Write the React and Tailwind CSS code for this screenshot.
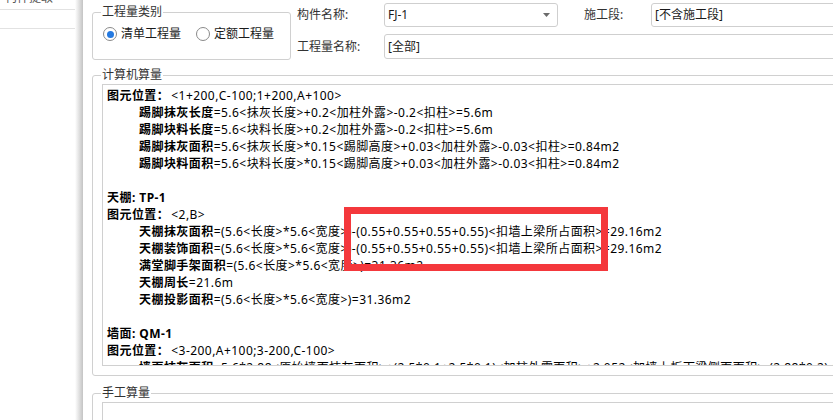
import React from "react";

const Caret = () => (
  <svg width="7" height="4" viewBox="0 0 7 4" className="shrink-0">
    <path d="M0 0 L7 0 L3.5 4 Z" fill="#6b6b6b" />
  </svg>
);

const Select = ({ value, className = "" }) => (
  <div
    className={`flex items-center justify-between rounded-[3px] border border-[#cfcfcf] bg-white pl-[3px] pr-[7px] ${className}`}
  >
    <span className="text-[12px] leading-none text-[#1a1a1a]">{value}</span>
    <Caret />
  </div>
);

const Radio = ({ checked, label }) => (
  <label className="flex items-center gap-[4px]">
    <span className="flex h-[14px] w-[14px] items-center justify-center rounded-full border border-[#8a8a8a] bg-white">
      {checked && <span className="h-[7px] w-[7px] rounded-full bg-[#2479e0]" />}
    </span>
    <span className="text-[12px] leading-[16px] text-[#1a1a1a]">{label}</span>
  </label>
);

const lines = [
  { kind: "pos", text: "<1+200,C-100;1+200,A+100>" },
  { kind: "item", label: "踢脚抹灰长度", text: "=5.6<抹灰长度>+0.2<加柱外露>-0.2<扣柱>=5.6m" },
  { kind: "item", label: "踢脚块料长度", text: "=5.6<块料长度>+0.2<加柱外露>-0.2<扣柱>=5.6m" },
  { kind: "item", label: "踢脚抹灰面积", text: "=5.6<抹灰长度>*0.15<踢脚高度>+0.03<加柱外露>-0.03<扣柱>=0.84m2" },
  { kind: "item", label: "踢脚块料面积", text: "=5.6<块料长度>*0.15<踢脚高度>+0.03<加柱外露>-0.03<扣柱>=0.84m2" },
  { kind: "blank" },
  { kind: "title", text: "天棚: TP-1" },
  { kind: "pos", text: "<2,B>" },
  { kind: "item", label: "天棚抹灰面积", text: "=(5.6<长度>*5.6<宽度>)-(0.55+0.55+0.55+0.55)<扣墙上梁所占面积>=29.16m2" },
  { kind: "item", label: "天棚装饰面积", text: "=(5.6<长度>*5.6<宽度>)-(0.55+0.55+0.55+0.55)<扣墙上梁所占面积>=29.16m2" },
  { kind: "item", label: "满堂脚手架面积", text: "=(5.6<长度>*5.6<宽度>)=31.36m2" },
  { kind: "item", label: "天棚周长", text: "=21.6m" },
  { kind: "item", label: "天棚投影面积", text: "=(5.6<长度>*5.6<宽度>)=31.36m2" },
  { kind: "blank" },
  { kind: "title", text: "墙面: QM-1" },
  { kind: "pos", text: "<3-200,A+100;3-200,C-100>" },
  {
    kind: "item",
    label: "墙面抹灰面积",
    text: "=5.6*2.88<原始墙面抹灰面积>+(2.5*0.1+2.5*0.1)<加柱外露面积>+2.052<加墙上板下梁侧面面积>-(2.88*0.2)<扣柱>=18.17m2",
  },
];

const Line = ({ line }) => {
  if (line.kind === "blank") return <div className="h-[17px]" />;
  if (line.kind === "title")
    return <div className="h-[17px] whitespace-nowrap font-bold">{line.text}</div>;
  if (line.kind === "pos")
    return (
      <div className="h-[17px] whitespace-nowrap">
        <span className="font-bold">图元位置：</span>
        <span className="ml-[2px]">{line.text}</span>
      </div>
    );
  return (
    <div className="h-[17px] whitespace-nowrap pl-[32px]">
      <span className="font-bold">{line.label}</span>
      <span>{line.text}</span>
    </div>
  );
};

export default function App() {
  return (
    <div className="flex h-[420px] w-[833px] overflow-hidden bg-white font-['Noto_Sans','Noto_Sans_CJK_SC',sans-serif] text-[#111]">
      {/* left list, mostly hidden behind the dialog */}
      <div className="w-[75px] shrink-0 bg-white">
        <div className="h-[10px] overflow-hidden border-b border-[#e2e2e2]">
          <div className="-mt-[10px] pl-[5px] text-[12px] leading-[16px] text-[#555]">构件提取</div>
        </div>
        <div className="h-[19px] border-b border-[#e2e2e2]" />
      </div>
      <div className="w-[8px] shrink-0 bg-gradient-to-r from-white to-[#c4c4c4]" />

      {/* dialog */}
      <div className="flex-1 pl-[9px] pr-[10px]">
        <div className="flex">
          <fieldset className="mt-[4px] h-[56px] w-[199px] shrink-0 rounded-[3px] border border-[#d0d0d0] px-[8px]">
            <legend className="px-[1px] text-[12px] leading-[16px] text-[#333]">工程量类别</legend>
            <div className="flex items-center gap-[15px] pl-[2px] pt-[6px]">
              <Radio checked label="清单工程量" />
              <Radio label="定额工程量" />
            </div>
          </fieldset>

          <div className="ml-[6px] flex flex-1 flex-col gap-[7px] pt-[3px] text-[12px] text-[#333]">
            <div className="flex h-[24px] items-center">
              <span className="w-[87px]">构件名称:</span>
              <Select value="FJ-1" className="h-[24px] w-[174px]" />
              <span className="w-[93px] pl-[26px]">施工段:</span>
              <Select value="[不含施工段]" className="h-[24px] flex-1" />
            </div>
            <div className="flex h-[25px] items-center">
              <span className="w-[87px]">工程量名称:</span>
              <Select value="[全部]" className="h-[25px] flex-1" />
            </div>
          </div>
        </div>

        <fieldset className="mt-[7px] rounded-[3px] border border-[#d0d0d0] px-[8px] pb-[9px]">
          <legend className="px-[1px] text-[12px] leading-[16px] text-[#333]">计算机算量</legend>
          <div className="relative mx-[1px] mt-[1px] h-[282px] overflow-hidden border border-[#d0d0d0] bg-white pl-[4px] pt-[2px] text-[12px] leading-[17px] tracking-[0.45px] text-black">
            {lines.map((line, i) => (
              <Line key={i} line={line} />
            ))}
            <div className="absolute right-[3px] top-[156px] h-[28px] w-[8px] rounded-[4px] bg-[#c9c9c9]" />
            <div className="absolute left-[241px] top-[122px] h-[64px] w-[264px] border-[7px] border-[#f4383c]" />
          </div>
        </fieldset>

        <fieldset className="mt-[9px] h-[60px] rounded-[3px] border border-[#d0d0d0] px-[8px]">
          <legend className="px-[1px] text-[12px] leading-[16px] text-[#333]">手工算量</legend>
          <div className="mx-[1px] mt-[1px] h-[60px] border border-[#d0d0d0] bg-white" />
        </fieldset>
      </div>
    </div>
  );
}
